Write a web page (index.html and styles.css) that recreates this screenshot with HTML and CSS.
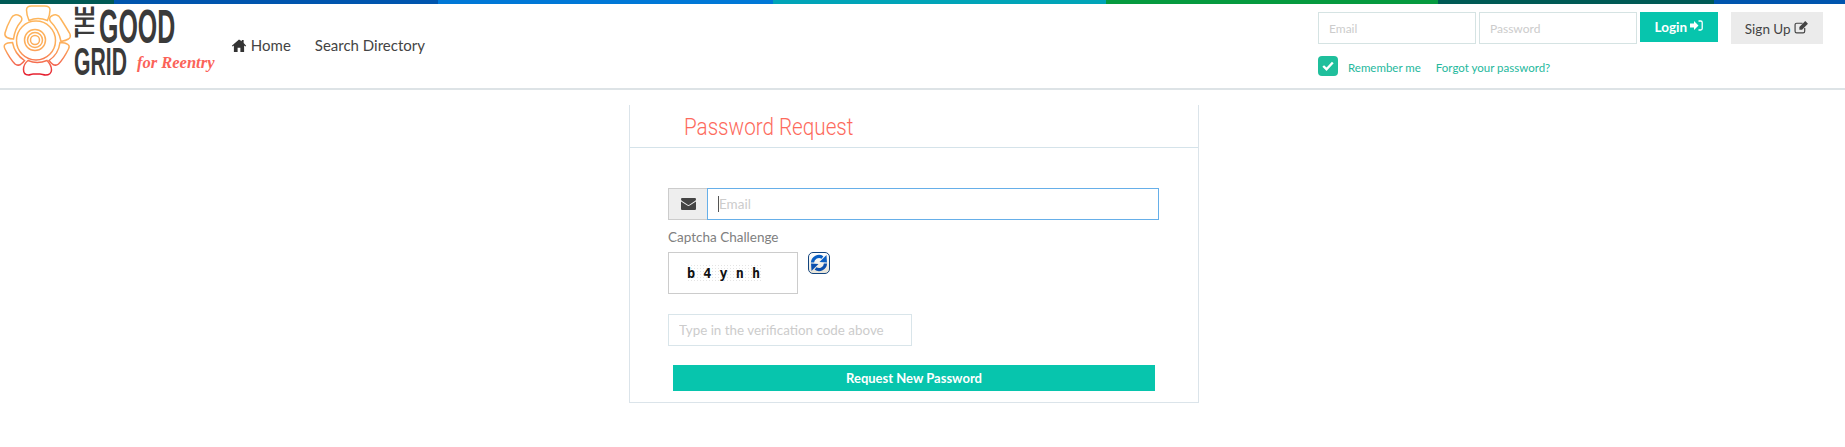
FILE: index.html
```html
<!DOCTYPE html>
<html lang="en">
<head>
    <meta charset="UTF-8">
    <title>Password Request</title>
    <link rel="stylesheet" href="styles.css">
</head>
<body>
    <div class="color-bar">
        <span class="bar-dark"></span>
        <span class="bar-blue"></span>
        <span class="bar-sky"></span>
        <span class="bar-teal"></span>
        <span class="bar-green"></span>
        <span class="bar-deep"></span>
        <span class="bar-end"></span>
    </div>
    <header class="navbar">
        <a class="brand" href="#">
            <svg class="brand-mark" width="70" height="72" viewBox="3 5 70 72" fill="none" stroke-width="1.500">
                <defs>
                    <linearGradient id="petal" x1="0" y1="6" x2="0" y2="76" gradientUnits="userSpaceOnUse">
                        <stop offset="0" stop-color="#fdb95c"/>
                        <stop offset="0.6" stop-color="#fdac5a"/>
                        <stop offset="0.82" stop-color="#f4694f"/>
                        <stop offset="1" stop-color="#e3142a"/>
                    </linearGradient>
                </defs>
                <g stroke="url(#petal)">
                    <path d="M26.500 10c0-3 2-4 5-4h13c3 0 5.500 1 5.500 4 0 3-1 7-2.500 10.500-6-2.500-13-2.500-18.500 0-1.500-3.500-2.500-7-2.500-10.500z"/>
                    <path d="M50.500 21.500c-1.500-2-1-4.500 1-5.500 2-1 3.500-1.500 5-1 2 .5 3 1.500 4 3.500 3.500 5.500 7 11 9.500 15.500 1 2.500.5 3.500-1.500 5-2 1.200-5 2-7.500 2.500-1.500-8-5.500-15-10.500-20z"/>
                    <path d="M21 21.500c1.500-2 1-4.500-1-5.500-2-1-3.500-1.500-5-1-2 .5-3 1.500-4 3.500C8 24 6 29 5 33c-.5 2.500 0 3.500 2 4.500 2 1 4 1.500 6.500 1.500 1-7 3.500-13 7.500-17.500z"/>
                    <path d="M12.500 42.500c-3 0-6 .5-7.500 2-1 1-1 2.500 0 4.500 2.500 5 6 11 10 15 2 1.500 3.500 1.500 5.500.5 1.500-1 3-2.500 4-4-6-4-10.500-10-12-18z"/>
                    <path d="M60 42.500c3 0 6 .5 8 2 1.500 1 1.500 2.500.5 4.500-2.500 5-6 11-10 15-2 1.500-3.500 1.500-5.500.5-1.500-1-3-2.500-4-4 6-4 10-10 11-18z"/>
                    <path d="M28 60.500c-2.500 2-4.500 5.500-4.500 9 0 3.500 2 5.500 5 5.500 1.500 0 3-1 4.500-1h7c2 0 3.500 1 5.500 1 3.500 0 6-2 6-5 0-3.500-2-7-4.500-9.500-6 2.500-13.500 2.500-19 0z"/>
                    <circle cx="36" cy="40.500" r="19.500"/>
                    <circle cx="35" cy="40" r="10.500"/>
                    <circle cx="35" cy="40" r="7.500"/>
                    <circle cx="35" cy="40" r="4.500"/>
                </g>
            </svg>
            <span class="brand-type">
                <span class="brand-top">
                    <span class="brand-the">THE</span>
                    <span class="brand-good">GOOD</span>
                </span>
                <span class="brand-bottom">
                    <span class="brand-grid">GRID</span>
                    <span class="brand-for">for Reentry</span>
                </span>
            </span>
        </a>
        <nav class="main-nav">
            <a href="#">
                <svg class="icon-home" width="16" height="13" viewBox="0 0 16 14"><path fill="#333" d="M8 0.500 0.300 7.200l0.900 1L2.500 7.100V14h4V9.500h3V14h4V7.100l1.300 1.100 0.900-1L13 4.200V1h-2v1.500z"/></svg>
                Home
            </a>
            <a href="#">Search Directory</a>
        </nav>
        <div class="login-box">
            <div class="login-row">
                <input class="login-input" type="text" placeholder="Email">
                <input class="login-input" type="password" placeholder="Password">
                <button class="btn-login" type="button">Login
                    <svg width="13" height="12" viewBox="0 0 13 12"><path fill="#fff" d="M0 3.500h4V1l4.500 4.500L4 10V7.500H0z"/><path fill="none" stroke="#fff" stroke-width="1.300" d="M8.500 1h2.200A1.500 1.500 0 0 1 12.200 2.500v6A1.500 1.500 0 0 1 10.700 10H8.500"/></svg>
                </button>
                <button class="btn-signup" type="button">Sign Up
                    <svg width="15" height="14" viewBox="0 0 14 13"><path fill="none" stroke="#444" stroke-width="1.100" d="M10 7.500V10.500A1.500 1.500 0 0 1 8.500 12h-6A1.500 1.500 0 0 1 1 10.500v-6A1.500 1.500 0 0 1 2.500 3H8"/><path fill="#444" d="M5 6.500 10.500 1 13 3.500 7.500 9H5z"/></svg>
                </button>
            </div>
            <div class="login-links">
                <span class="check-box">
                    <svg width="12" height="10" viewBox="0 0 12 10"><path fill="none" stroke="#fff" stroke-width="2.400" d="M1.200 5 4.500 8.200 10.800 1.500"/></svg>
                </span>
                <a class="remember" href="#">Remember me</a>
                <a class="forgot" href="#">Forgot your password?</a>
            </div>
        </div>
    </header>
    <main class="panel">
        <div class="panel-head"><h2 class="panel-title">Password Request</h2></div>
        <form class="panel-body">
            <div class="input-group">
                <span class="input-addon">
                    <svg width="15" height="12" viewBox="0 0 15 12"><path fill="#444" d="M1.300 0h12.400c.7 0 1.300.6 1.300 1.200 0 .8-.5 1.400-1.100 1.800L8.300 6.700c-.5.300-1.100.3-1.600 0L1.100 3C.5 2.600 0 2 0 1.200 0 .6.600 0 1.300 0zM0 3.400l6.300 4.200c.8.500 1.600.5 2.400 0L15 3.400v7.300c0 .7-.6 1.300-1.300 1.300H1.300C.6 12 0 11.400 0 10.700z"/></svg>
                </span>
                <div class="email-field"><span class="caret"></span><span class="email-hint">Email</span></div>
            </div>
            <label class="captcha-label">Captcha Challenge</label>
            <div class="captcha-row">
                <div class="captcha-image"><span>b 4 y n h</span></div>
                <button class="captcha-refresh" type="button">
                    <svg width="18" height="18" viewBox="0 0 18 18">
                        <path fill="none" stroke="#0a5fc4" stroke-width="3.200" d="M2.500 8.500A6.500 6.500 0 0 1 12.500 3.500"/>
                        <path fill="#0a5fc4" d="M9.500 8 17 8.500 16.500 1z"/>
                        <path fill="none" stroke="#0a4fae" stroke-width="3.200" d="M15.500 9.500A6.500 6.500 0 0 1 5.500 14.500"/>
                        <path fill="#0a4fae" d="M8.500 10 1 9.500 1.500 17z"/>
                    </svg>
                </button>
            </div>
            <input class="code-input" type="text" placeholder="Type in the verification code above">
            <button class="btn-request" type="button">Request New Password</button>
        </form>
    </main>
</body>
</html>
```
FILE: styles.css
```css
* {
    margin: 0;
    padding: 0;
    box-sizing: border-box;
}
body {
    font-family: 'Lato', sans-serif;
    background: #fff;
    color: #333;
    min-height: 447px;
}
a {
    text-decoration: none;
    color: inherit;
}
.color-bar {
    display: flex;
    height: 4px;
}
.color-bar span {
    display: block;
}
.bar-dark { width: 114px; background: #005a55; }
.bar-blue { width: 324px; background: #0055ae; }
.bar-sky { width: 335px; background: #0078d7; }
.bar-teal { width: 333px; background: #00a4b8; }
.bar-green { width: 332px; background: #069a3f; }
.bar-deep { width: 276px; background: #005a55; }
.bar-end { flex: 1; background: #0055ae; }
.navbar {
    display: flex;
    height: 86px;
    border-bottom: 2px solid #dde3e6;
}
.brand {
    display: flex;
    width: 231px;
    padding: 1px 0 0 3px;
}
.brand-type {
    display: flex;
    flex-direction: column;
    margin-left: 1px;
    color: #3a3a3a;
    font-family: 'Liberation Sans', sans-serif;
    font-weight: 700;
}
.brand-top, .brand-bottom {
    display: flex;
}
.brand-top {
    height: 38px;
    margin-top: 3px;
}
.brand-bottom {
    height: 30px;
    margin-top: 1px;
}
.brand-the {
    display: block;
    width: 22px;
    height: 38px;
    margin-right: 3px;
    font-size: 28px;
    line-height: 22px;
    writing-mode: vertical-rl;
    text-align: center;
    transform: rotate(180deg) scaleY(0.57);
}
.brand-good {
    display: block;
    font-size: 48px;
    line-height: 38px;
    width: 77px;
    transform: scaleX(0.52);
    transform-origin: left center;
}
.brand-grid {
    display: block;
    font-size: 38.500px;
    line-height: 30px;
    width: 63px;
    transform: scaleX(0.55);
    transform-origin: left center;
}
.brand-for {
    display: block;
    margin-top: 6px;
    font-family: 'Liberation Serif', serif;
    font-style: italic;
    font-weight: 700;
    font-size: 16.500px;
    line-height: 20px;
    white-space: nowrap;
    color: #fb6359;
}
.main-nav {
    display: flex;
    gap: 24px;
    padding-top: 30px;
    font-size: 15px;
    line-height: 22px;
    color: #444;
    white-space: nowrap;
}
.main-nav a {
    display: block;
}
.icon-home {
    vertical-align: -1px;
}
.login-box {
    margin-left: auto;
    padding: 8px 0 0;
    width: 527px;
}
.login-row {
    display: flex;
    align-items: flex-start;
}
.login-input {
    width: 158px;
    height: 32px;
    margin-right: 3px;
    padding: 0 10px;
    border: 1px solid #d5e3e3;
    font: 12px 'Lato', sans-serif;
}
.login-input::placeholder, .code-input::placeholder {
    color: #ccc;
}
.btn-login {
    width: 78px;
    height: 30px;
    background: #07c5ad;
    color: #fff;
    border: none;
    font: 700 13.500px 'Lato', sans-serif;
}
.btn-signup {
    width: 92px;
    height: 32px;
    margin-left: 13px;
    background: #ebebeb;
    color: #444;
    border: none;
    font: 13.500px 'Lato', sans-serif;
}
.login-links {
    display: flex;
    align-items: center;
    margin-top: 12px;
    color: #25b89d;
    font-size: 11.500px;
}
.remember, .forgot {
    padding-top: 3px;
}
.check-box {
    display: flex;
    align-items: center;
    justify-content: center;
    width: 20px;
    height: 20px;
    margin-right: 10px;
    border-radius: 4px;
    background: #1fbf9c;
}
.remember {
    margin-right: 15px;
}
.panel {
    width: 570px;
    height: 298px;
    margin: 15px 0 0 629px;
    border: 1px solid #dbe4ea;
    border-top: none;
}
.panel-head {
    height: 43px;
    padding: 8px 0 0 54px;
    border-bottom: 1px solid #d5e3ea;
}
.panel-title {
    width: 197px;
    font-family: 'Roboto', sans-serif;
    font-size: 24px;
    line-height: 29px;
    font-weight: 300;
    color: #fd6a5c;
    white-space: nowrap;
    transform: scaleX(0.86);
    transform-origin: left center;
}
.panel-body {
    padding: 40px 0 0 38px;
}
.input-group {
    display: flex;
    width: 491px;
    height: 32px;
}
.input-addon {
    display: flex;
    align-items: center;
    justify-content: center;
    width: 39px;
    background: #eee;
    border: 1px solid #ccc;
    border-right: none;
}
.email-field {
    display: flex;
    align-items: center;
    flex: 1;
    padding-left: 10px;
    border: 1px solid #66afe9;
    font-size: 13.500px;
}
.caret {
    width: 1px;
    height: 16px;
    background: #555;
}
.email-hint {
    color: #ccc;
}
.captcha-label {
    display: block;
    margin-top: 8px;
    font-size: 13.500px;
    line-height: 18px;
    color: #808080;
}
.captcha-row {
    display: flex;
    align-items: flex-start;
    margin-top: 6px;
}
.captcha-image {
    width: 130px;
    height: 42px;
    padding: 11px 0 0 18px;
    border: 1px solid #ccc;
}
.captcha-image span {
    display: block;
    width: 74px;
    font-family: 'DejaVu Sans Mono', monospace;
    font-size: 13.500px;
    line-height: 18px;
    font-weight: 700;
    color: #111;
    white-space: pre;
    background: radial-gradient(#e4e4e4 0.6px, transparent 1px) 0 0 / 3px 3px;
}
.captcha-refresh {
    display: flex;
    align-items: center;
    justify-content: center;
    width: 22px;
    height: 22px;
    margin-left: 10px;
    border: 1px solid #13457f;
    border-radius: 5px;
    background: linear-gradient(#fff, #e8e4d8);
}
.code-input {
    display: block;
    width: 244px;
    height: 32px;
    margin-top: 20px;
    padding: 0 10px;
    border: 1px solid #d9e5ea;
    font: 13.400px 'Lato', sans-serif;
}
.btn-request {
    display: block;
    width: 482px;
    height: 26px;
    margin: 19px 0 0 5px;
    background: #07c5ad;
    color: #fff;
    border: none;
    font: 700 13px 'Lato', sans-serif;
}
```
